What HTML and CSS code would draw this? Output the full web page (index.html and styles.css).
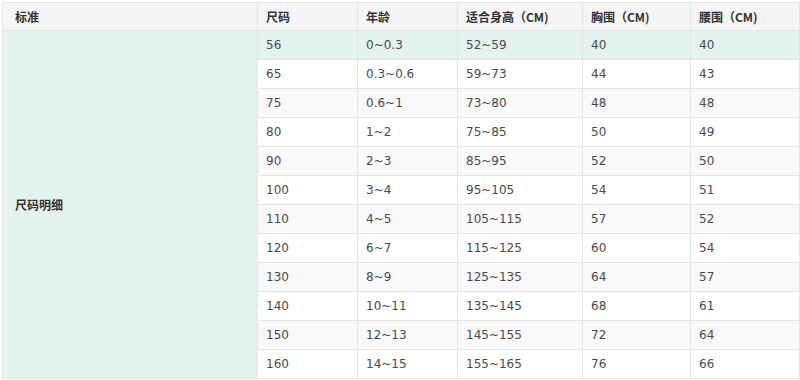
FILE: index.html
```html
<!DOCTYPE html>
<html lang="zh">
<head>
<meta charset="utf-8">
<title>尺码明细</title>
<link rel="stylesheet" href="styles.css">
</head>
<body>
<table class="size-table">
  <colgroup>
    <col class="c1"><col class="c2"><col class="c3"><col class="c4"><col class="c5"><col class="c6">
  </colgroup>
  <thead>
    <tr><th class="first">标准</th><th>尺码</th><th>年龄</th><th>适合身高（CM)</th><th>胸围（CM)</th><th>腰围（CM)</th></tr>
  </thead>
  <tbody>
    <tr class="hl"><td class="first label" rowspan="12">尺码明细</td><td>56</td><td>0~0.3</td><td>52~59</td><td>40</td><td>40</td></tr>
    <tr><td>65</td><td>0.3~0.6</td><td>59~73</td><td>44</td><td>43</td></tr>
    <tr class="alt"><td>75</td><td>0.6~1</td><td>73~80</td><td>48</td><td>48</td></tr>
    <tr><td>80</td><td>1~2</td><td>75~85</td><td>50</td><td>49</td></tr>
    <tr class="alt"><td>90</td><td>2~3</td><td>85~95</td><td>52</td><td>50</td></tr>
    <tr><td>100</td><td>3~4</td><td>95~105</td><td>54</td><td>51</td></tr>
    <tr class="alt"><td>110</td><td>4~5</td><td>105~115</td><td>57</td><td>52</td></tr>
    <tr><td>120</td><td>6~7</td><td>115~125</td><td>60</td><td>54</td></tr>
    <tr class="alt"><td>130</td><td>8~9</td><td>125~135</td><td>64</td><td>57</td></tr>
    <tr><td>140</td><td>10~11</td><td>135~145</td><td>68</td><td>61</td></tr>
    <tr class="alt"><td>150</td><td>12~13</td><td>145~155</td><td>72</td><td>64</td></tr>
    <tr><td>160</td><td>14~15</td><td>155~165</td><td>76</td><td>66</td></tr>
  </tbody>
</table>
</body>
</html>
```
FILE: styles.css
```css
html, body {
  margin: 0;
  padding: 0;
  background: #ffffff;
}
body {
  padding: 2px 0 0 2px;
  font-family: "DejaVu Sans", "Noto Sans CJK SC", sans-serif;
  font-size: 12px;
  color: #4a4a4a;
}
.size-table {
  border-collapse: collapse;
  table-layout: fixed;
  width: 797px;
}
.c1 { width: 255px; }
.c2 { width: 100px; }
.c3 { width: 100px; }
.c4 { width: 125px; }
.c5 { width: 108px; }
.c6 { width: 109px; }
.size-table th,
.size-table td {
  border: 1px solid #e4e4e4;
  padding: 0 8px;
  text-align: left;
  vertical-align: middle;
  white-space: nowrap;
}
.size-table th {
  height: 27px;
  background: #f5f5f5;
  font-family: "Noto Sans CJK SC", "DejaVu Sans", sans-serif;
  font-weight: bold;
  font-size: 12px;
  color: #333333;
}
.size-table td {
  height: 28px;
}
.size-table .first {
  padding-left: 12px;
}
.size-table .label {
  background: #e4f3ee;
  font-family: "Noto Sans CJK SC", sans-serif;
  font-weight: bold;
  color: #333333;
}
.size-table tr.hl td {
  background: #e4f3ee;
}
.size-table tr.alt td {
  background: #f9f9f9;
}
```
